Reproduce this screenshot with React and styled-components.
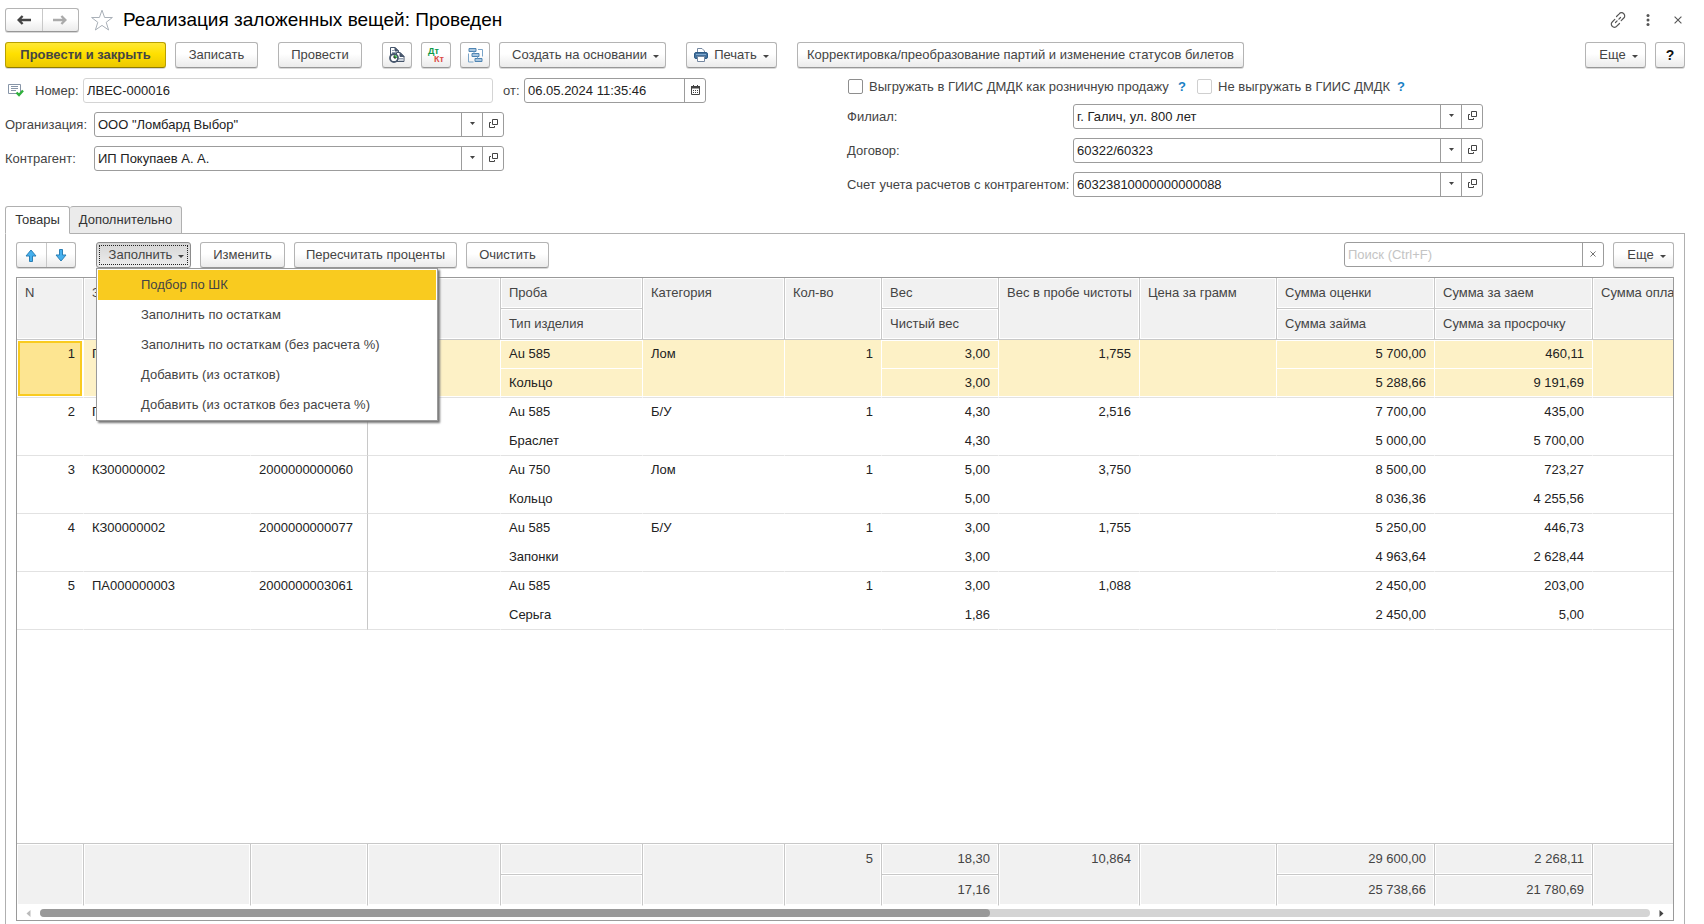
import React from "react";
import styled, { createGlobalStyle, css } from "styled-components";

const Global = createGlobalStyle`
  * { box-sizing: border-box; }
  body { margin: 0; background: #fff; }
  body, button, input, table {
    font-family: "Liberation Sans", Arial, sans-serif;
    font-size: 13px;
    line-height: 16px;
    color: #444;
  }
`;

const Page = styled.div`
  display: flex;
  flex-direction: column;
  height: 100vh;
  overflow: hidden;
  padding: 8px 19px 0 5px;
`;

const TitleBar = styled.header`
  display: flex;
  align-items: center;
  height: 24px;
`;

const Title = styled.h1`
  margin: 0 0 0 9px;
  flex: 1;
  font-size: 19px;
  line-height: 24px;
  font-weight: 400;
  color: #000;
  white-space: nowrap;
`;

const raised = css`
  border: 1px solid #b4b4b4;
  border-bottom-color: #979797;
  border-radius: 3px;
  background: linear-gradient(#fff 0%, #fff 45%, #ebebeb 100%);
  box-shadow: 0 1px 0 #d8d8d8;
`;

const ButtonPair = styled.div`
  ${raised}
  display: flex;
  width: ${(p) => p.$w}px;
  height: ${(p) => p.$h}px;
  flex: none;
`;

const PairButton = styled.button`
  flex: 1;
  display: flex;
  align-items: center;
  justify-content: center;
  padding: 0;
  border: 0;
  background: none;
  & + & { border-left: 1px solid #c8c8c8; }
`;

const IconButton = styled.button`
  display: flex;
  align-items: center;
  justify-content: center;
  width: 24px;
  height: 24px;
  padding: 0;
  border: 0;
  background: none;
`;

const StarButton = styled(IconButton)`
  margin-left: 11px;
`;

const WindowActions = styled.div`
  display: flex;
  gap: 6px;
  margin-right: -5px;
`;

const Toolbar = styled.div`
  display: flex;
  gap: 9px;
  margin-top: 10px;
`;

const Group = styled.div`
  display: flex;
  gap: 9px;
  margin-right: ${(p) => (p.$last ? 0 : 11)}px;
`;

const Spacer = styled.div`
  flex: 1;
`;

const Button = styled.button`
  ${raised}
  display: flex;
  align-items: center;
  justify-content: center;
  gap: 6px;
  width: ${(p) => p.$w}px;
  height: 26px;
  padding: 0;
  white-space: nowrap;
  flex: none;
  ${(p) => p.$menu && css`padding-left: 6px;`}
  ${(p) => p.$primary && css`
    border-color: #b8a000;
    border-bottom-color: #8f7c00;
    background: linear-gradient(#ffe836 0%, #ffe000 45%, #ecc800 100%);
    font-weight: 700;
  `}
  ${(p) => p.$pressed && css`
    border-color: #8c8c8c;
    background: linear-gradient(#d6d6d6, #ededed);
    outline: 1px dotted #222;
    outline-offset: -4px;
  `}
  ${(p) => p.$bold && css`
    font-weight: 700;
    font-size: 14px;
    color: #111;
  `}
`;

const Form = styled.div`
  display: flex;
  margin-top: 10px;
`;

const LeftFields = styled.div`
  display: flex;
  flex-direction: column;
  gap: 9px;
  width: 842px;
`;

const RightFields = styled.div`
  display: flex;
  flex-direction: column;
  gap: 9px;
`;

const FieldRow = styled.div`
  display: flex;
  align-items: center;
  height: 25px;
`;

const FieldLabel = styled.label`
  width: ${(p) => p.$w}px;
  white-space: nowrap;
  flex: none;
`;

const StatusIcon = styled.span`
  display: flex;
  width: 30px;
  padding-left: 3px;
`;

const DateLabel = styled.label`
  width: 31px;
  padding-left: 10px;
`;

const Box = styled.div`
  display: flex;
  width: ${(p) => p.$w}px;
  height: 25px;
  border: 1px solid ${(p) => (p.$muted ? "#d4d4d4" : "#9c9c9c")};
  border-radius: 3px;
  background: #fff;
  overflow: hidden;
`;

const TextInput = styled.input`
  flex: 1;
  min-width: 0;
  height: 100%;
  padding: 0 3px;
  border: 0;
  outline: 0;
  background: none;
  color: #222;
  &::placeholder { color: #c4c4c4; opacity: 1; }
`;

const BoxButton = styled.button`
  display: flex;
  align-items: center;
  justify-content: center;
  width: 21px;
  padding: 0 0 2px;
  border: 0;
  border-left: 1px solid #9c9c9c;
  background: none;
`;

const CheckRow = styled.div`
  display: flex;
  align-items: center;
  height: 17px;
  padding-left: 1px;
`;

const Check = styled.input`
  appearance: none;
  width: 15px;
  height: 15px;
  margin: 0 6px 0 0;
  border: 1px solid ${(p) => (p.disabled ? "#cfcfcf" : "#8e8e8e")};
  border-radius: 2px;
  background: #fff;
`;

const CheckLabel = styled.label`
  width: ${(p) => p.$w}px;
  white-space: nowrap;
`;

const Hint = styled.button`
  width: 19px;
  padding: 0;
  border: 0;
  background: none;
  font-weight: 700;
  text-align: left;
  color: #1a7fc4;
`;

const Tabs = styled.div`
  display: flex;
  height: 28px;
  margin-bottom: -1px;
  margin-top: 9px;
  z-index: 1;
`;

const Tab = styled.button`
  width: ${(p) => p.$w}px;
  padding: 0;
  border: 1px solid #b0b0b0;
  border-radius: 3px 3px 0 0;
  background: ${(p) => (p.$active ? "#fff" : "#ebebeb")};
  border-bottom-color: ${(p) => (p.$active ? "#fff" : "#b0b0b0")};
  color: #333;
  & + & { border-left: 0; }
`;

const Panel = styled.section`
  flex: 1;
  min-height: 0;
  display: flex;
  flex-direction: column;
  border: 1px solid #b0b0b0;
  border-bottom: 0;
  padding: 8px 10px 3px;
`;

const PanelBar = styled.div`
  display: flex;
  gap: 9px;
`;

const MenuAnchor = styled.div`
  position: relative;
  margin-left: 11px;
`;

const Menu = styled.ul`
  position: absolute;
  top: 26px;
  left: 0;
  z-index: 5;
  width: 342px;
  margin: 0;
  padding: 1px 1px 0;
  list-style: none;
  background: #fff;
  border: 1px solid #9a9a9a;
  box-shadow: 2px 2px 2px #777;
`;

const MenuItem = styled.button`
  display: block;
  width: 100%;
  height: 30px;
  padding: 0 0 0 43px;
  border: 0;
  text-align: left;
  background: ${(p) => (p.$active ? "#f9cb1f" : "transparent")};
`;

const Frame = styled.div`
  flex: 1;
  min-height: 0;
  display: flex;
  flex-direction: column;
  margin-top: 9px;
  border: 1px solid #9a9a9a;
  overflow: hidden;
`;

const Grid = styled.table`
  width: 1738px;
  table-layout: fixed;
  border-collapse: separate;
  border-spacing: 0;
  flex: none;
`;

const HeadCell = styled.th`
  height: 31px;
  padding: 7px 8px;
  vertical-align: top;
  text-align: left;
  font-weight: 400;
  white-space: nowrap;
  background: #f1f1f1;
  border-right: 1px solid #c8c8c8;
  border-bottom: 1px solid #c8c8c8;
  box-shadow: inset 0 0 0 1px #fff;
`;

const Cell = styled.td`
  height: 29px;
  padding: 6px 8px;
  vertical-align: top;
  white-space: nowrap;
  color: #222;
  text-align: ${(p) => (p.$right ? "right" : "left")};
  border-right: 1px solid ${(p) => (p.$line ? "#c8c8c8" : "transparent")};
  border-bottom: 1px solid ${(p) => (p.$inner ? "transparent" : "#e2e2e2")};
  ${(p) => p.$selected && css`
    background: #fdf1c6;
    background-clip: padding-box;
    border-right-color: #fff;
    ${p.$inner && css`border-bottom-color: #fff;`}
    box-shadow: inset 0 ${p.$inner ? 1 : 0}px 0 #fff, inset 0 ${p.$inner ? 0 : -1}px 0 #fff;
  `}
  ${(p) => p.$current && css`
    background: #fde591;
    box-shadow: inset 0 0 0 1px #fff, inset 0 0 0 3px #f9cb1f;
  `}
`;

const FootCell = styled(HeadCell).attrs({ as: "td" })`
  text-align: right;
  border-bottom-color: ${(p) => (p.$inner ? "#c8c8c8" : "#fff")};
`;

const FootGrid = styled(Grid)`
  border-top: 1px solid #c8c8c8;
`;

const ScrollBar = styled.div`
  display: flex;
  align-items: center;
  flex: none;
  height: 14px;
  padding: 0 9px;
  gap: 9px;
`;

const Track = styled.div`
  flex: 1;
  height: 8px;
  border-radius: 4px;
  background: #d4d4d4;
`;

const Thumb = styled.div`
  width: 59%;
  height: 8px;
  border-radius: 4px;
  background: #999;
`;

const Caret = () => (
  <svg width="6" height="5" viewBox="0 0 6 5"><path d="M0 2h6L3 5z" fill="#444" /></svg>
);

const SmallCaret = () => (
  <svg width="5" height="3" viewBox="0 0 5 3"><path d="M0 0h5L2.5 3z" fill="#444" /></svg>
);

const OpenIcon = () => (
  <svg width="9" height="9" viewBox="0 0 9 9" fill="none" stroke="#444">
    <path d="M3.5 0.5h5v5h-5z" /><path d="M2 3.5H0.5v5h5V7" />
  </svg>
);

const BackArrow = ({ color }) => (
  <svg width="14" height="10" viewBox="0 0 14 10" fill="none" stroke={color} strokeWidth="2.4">
    <path d="M14 5H2M5.6 1L1.6 5l4 4" />
  </svg>
);

const ForwardArrow = ({ color }) => (
  <svg width="14" height="10" viewBox="0 0 14 10" fill="none" stroke={color} strokeWidth="2.4">
    <path d="M0 5h12M8.4 1l4 4-4 4" />
  </svg>
);

const StarIcon = () => (
  <svg width="24" height="23" viewBox="0 0 24 23" fill="#fff" stroke="#a9b0b8">
    <path d="M12 1.2L14.600 8.500H22.400L16.200 13.300L18.600 21L12 16.400L5.400 21L7.800 13.300L1.600 8.500H9.400Z" />
  </svg>
);

const LinkIcon = () => (
  <svg width="16" height="16" viewBox="0 0 16 16" fill="none" stroke="#555" strokeWidth="1.2" strokeLinecap="round">
    <path d="M6.5 4.5l2.7-2.7a2.9 2.9 0 0 1 4.600 0 2.9 2.9 0 0 1 0 4.200l-2.600 2.600" />
    <path d="M9.5 11.5l-2.700 2.700a2.9 2.9 0 0 1-4.600 0 2.9 2.9 0 0 1 0-4.200l2.600-2.600" />
    <path d="M5.5 10.500l1.600-1.600M8.900 7.100l1.600-1.600" />
  </svg>
);

const DotsIcon = () => (
  <svg width="4" height="12" viewBox="0 0 4 12" fill="#555">
    <circle cx="2" cy="1.6" r="1.5" /><circle cx="2" cy="6" r="1.5" /><circle cx="2" cy="10.4" r="1.5" />
  </svg>
);

const CrossIcon = ({ size }) => (
  <svg width={size} height={size} viewBox="0 0 8 8" stroke="#555" strokeWidth="1.1">
    <path d="M0.6 0.6l6.8 6.8M7.4 0.6L0.6 7.4" />
  </svg>
);

const ReportIcon = () => (
  <svg width="16" height="16" viewBox="0 0 16 16" fill="none" stroke="#46566c">
    <path d="M1.500 8V0.500H6L9.500 4v3" fill="#fff" />
    <path d="M6 0.500L9.500 4H6z" fill="#46566c" />
    <path d="M3 3.500h2M3 5.500h4" stroke="#93a1b3" />
    <path d="M7.500 5.500H11l4 4v5H7.500z" fill="#fff" />
    <path d="M11 5.500l4 4h-4z" fill="#46566c" />
    <path d="M10 11.500h4M10 13h4" stroke="#93a1b3" />
    <circle cx="5" cy="11" r="4" fill="#fff" strokeWidth="1.8" />
    <path d="M5 11V8a3 3 0 0 1 3 3z" fill="#46c04c" stroke="none" />
    <path d="M5 8.500V11h2" stroke="#222" />
  </svg>
);

const DtKt = styled.span`
  display: flex;
  flex-direction: column;
  width: 16px;
  font-size: 9px;
  line-height: 8px;
  font-weight: 700;
  text-align: left;
  color: #0e9a4a;
`;

const Kt = styled.span`
  align-self: flex-end;
  color: #dc4b45;
`;

const StructureIcon = () => (
  <svg width="15" height="15" viewBox="0 0 15 15" fill="#a9c6df" stroke="#4f85b3">
    <path d="M1 0.500h7v3H1zM4 5.500h7v3H4zM7 10.500h7v3H7z" />
    <path d="M10 1.500h4.500V8.500M0.500 5.500v8.500h5M6 3.500v2M9.500 8.500v2" fill="none" stroke="#7ba5c9" />
  </svg>
);

const PrinterIcon = () => (
  <svg width="14" height="14" viewBox="0 0 14 14">
    <path d="M3.500 5V0.500H8L10.500 3v2" fill="#fff" stroke="#7487a0" />
    <rect x="0.500" y="4.500" width="13" height="6" rx="1.5" fill="#44719c" stroke="#2c5a86" />
    <path d="M2 6.500h10" stroke="#7fa8cf" />
    <path d="M3.500 8.500h7v5h-7z" fill="#fff" stroke="#7487a0" />
  </svg>
);

const CalendarIcon = () => (
  <svg width="9" height="10" viewBox="0 0 9 10">
    <path d="M0.5 2.5h8v7h-8z" fill="#fff" stroke="#444" />
    <path d="M0 1h9v2.5H0zM2 0h1v2H2zM6 0h1v2H6z" fill="#444" />
    <path d="M2 5.5h5M2 7.5h5" stroke="#444" strokeDasharray="1 1" />
  </svg>
);

const DocIcon = () => (
  <svg width="16" height="13" viewBox="0 0 16 13" fill="none">
    <path d="M0.5 0.5h12v9h-12z" fill="#fff" stroke="#8795a8" />
    <path d="M3 2.500h7M3 4.500h7M3 6.500h5" stroke="#8795a8" />
    <path d="M8.500 8.500l2.500 2.500 4-4.500" stroke="#2fb03c" strokeWidth="2.4" />
  </svg>
);

const MoveArrow = ({ down }) => (
  <svg width="12" height="13" viewBox="0 0 12 13" fill="#45b0ee" stroke="#2a7fb5">
    {down
      ? <path d="M4.5 0.5h3v5.5h3.5L6 12 1 6h3.5z" />
      : <path d="M6 1l5 6H7.5v5.5h-3V7H1z" />}
  </svg>
);

const ScrollArrow = ({ left }) => (
  <svg width="5" height="7" viewBox="0 0 5 7" fill={left ? "#bbb" : "#444"}>
    <path d={left ? "M4.5 0v7L0.5 3.5z" : "M0.5 0v7l4-3.5z"} />
  </svg>
);

const columnWidths = [67, 167, 117, 133, 142, 142, 97, 117, 141, 137, 158, 158, 162];

const Columns = () => (
  <colgroup>{columnWidths.map((w, i) => <col key={i} width={w} />)}</colgroup>
);

const header = [
  ["N"], ["Залоговый билет"], ["Штрихкод"], [""],
  ["Проба", "Тип изделия"], ["Категория"], ["Кол-во"], ["Вес", "Чистый вес"],
  ["Вес в пробе чистоты"], ["Цена за грамм"], ["Сумма оценки", "Сумма займа"],
  ["Сумма за заем", "Сумма за просрочку"], ["Сумма оплаты"],
];

const rows = [
  [["1"], ["ПА000000001"], [""], [""], ["Au 585", "Кольцо"], ["Лом"], ["1"], ["3,00", "3,00"], ["1,755"], [""], ["5 700,00", "5 288,66"], ["460,11", "9 191,69"], [""]],
  [["2"], ["ПА000000001"], [""], [""], ["Au 585", "Браслет"], ["Б/У"], ["1"], ["4,30", "4,30"], ["2,516"], [""], ["7 700,00", "5 000,00"], ["435,00", "5 700,00"], [""]],
  [["3"], ["КЗ00000002"], ["2000000000060"], [""], ["Au 750", "Кольцо"], ["Лом"], ["1"], ["5,00", "5,00"], ["3,750"], [""], ["8 500,00", "8 036,36"], ["723,27", "4 255,56"], [""]],
  [["4"], ["КЗ00000002"], ["2000000000077"], [""], ["Au 585", "Запонки"], ["Б/У"], ["1"], ["3,00", "3,00"], ["1,755"], [""], ["5 250,00", "4 963,64"], ["446,73", "2 628,44"], [""]],
  [["5"], ["ПА000000003"], ["2000000003061"], [""], ["Au 585", "Серьга"], [""], ["1"], ["3,00", "1,86"], ["1,088"], [""], ["2 450,00", "2 450,00"], ["203,00", "5,00"], [""]],
];

const totals = [
  [""], [""], [""], [""], ["", ""], [""], ["5"], ["18,30", "17,16"], ["10,864"], [""],
  ["29 600,00", "25 738,66"], ["2 268,11", "21 780,69"], [""],
];

const numeric = new Set([0, 6, 7, 8, 9, 10, 11, 12]);

const fillActions = [
  "Подбор по ШК",
  "Заполнить по остаткам",
  "Заполнить по остаткам (без расчета %)",
  "Добавить (из остатков)",
  "Добавить (из остатков без расчета %)",
];

function PairRows({ cells, CellType, cellProps = () => ({}) }) {
  return (
    <>
      <tr>
        {cells.map((c, i) => (
          <CellType key={i} rowSpan={c.length === 1 ? 2 : 1} $inner={c.length === 2} {...cellProps(i)}>{c[0]}</CellType>
        ))}
      </tr>
      <tr>
        {cells.map((c, i) => c.length === 2 && <CellType key={i} {...cellProps(i)}>{c[1]}</CellType>)}
      </tr>
    </>
  );
}

function RefField({ id, label, labelWidth, value }) {
  return (
    <FieldRow>
      <FieldLabel htmlFor={id} $w={labelWidth}>{label}</FieldLabel>
      <Box $w={410}>
        <TextInput id={id} defaultValue={value} />
        <BoxButton aria-label="Выбрать"><SmallCaret /></BoxButton>
        <BoxButton aria-label="Открыть"><OpenIcon /></BoxButton>
      </Box>
    </FieldRow>
  );
}

export default function App() {
  return (
    <Page>
      <Global />
      <TitleBar>
        <ButtonPair $w={74} $h={24}>
          <PairButton aria-label="Назад"><BackArrow color="#444" /></PairButton>
          <PairButton aria-label="Вперед"><ForwardArrow color="#aaa" /></PairButton>
        </ButtonPair>
        <StarButton aria-label="В избранное"><StarIcon /></StarButton>
        <Title>Реализация заложенных вещей: Проведен</Title>
        <WindowActions>
          <IconButton aria-label="Ссылка"><LinkIcon /></IconButton>
          <IconButton aria-label="Меню"><DotsIcon /></IconButton>
          <IconButton aria-label="Закрыть"><CrossIcon size={8} /></IconButton>
        </WindowActions>
      </TitleBar>

      <Toolbar>
        <Group>
          <Button $w={161} $primary>Провести и закрыть</Button>
          <Button $w={83}>Записать</Button>
        </Group>
        <Group><Button $w={84}>Провести</Button></Group>
        <Group>
          <Button $w={30} aria-label="Отчеты"><ReportIcon /></Button>
          <Button $w={30}><DtKt>Дт<Kt>Кт</Kt></DtKt></Button>
          <Button $w={30} aria-label="Структура"><StructureIcon /></Button>
          <Button $w={167} $menu>Создать на основании <Caret /></Button>
        </Group>
        <Group><Button $w={91}><PrinterIcon />Печать <Caret /></Button></Group>
        <Group $last>
          <Button $w={447}>Корректировка/преобразование партий и изменение статусов билетов</Button>
        </Group>
        <Spacer />
        <Button $w={61} $menu>Еще <Caret /></Button>
        <Button $w={30} $bold>?</Button>
      </Toolbar>

      <Form>
        <LeftFields>
          <FieldRow>
            <StatusIcon><DocIcon /></StatusIcon>
            <FieldLabel htmlFor="number" $w={48}>Номер:</FieldLabel>
            <Box $w={410} $muted><TextInput id="number" defaultValue="ЛВЕС-000016" /></Box>
            <DateLabel htmlFor="date">от:</DateLabel>
            <Box $w={182}>
              <TextInput id="date" defaultValue="06.05.2024 11:35:46" />
              <BoxButton aria-label="Календарь"><CalendarIcon /></BoxButton>
            </Box>
          </FieldRow>
          <RefField id="org" label="Организация:" labelWidth={89} value={'ООО "Ломбард Выбор"'} />
          <RefField id="partner" label="Контрагент:" labelWidth={89} value="ИП Покупаев А. А." />
        </LeftFields>
        <RightFields>
          <CheckRow>
            <Check type="checkbox" id="retail" />
            <CheckLabel htmlFor="retail" $w={309}>Выгружать в ГИИС ДМДК как розничную продажу</CheckLabel>
            <Hint>?</Hint>
            <Check type="checkbox" id="skip" disabled />
            <CheckLabel htmlFor="skip" $w={179}>Не выгружать в ГИИС ДМДК</CheckLabel>
            <Hint>?</Hint>
          </CheckRow>
          <RefField id="branch" label="Филиал:" labelWidth={226} value="г. Галич, ул. 800 лет" />
          <RefField id="contract" label="Договор:" labelWidth={226} value="60322/60323" />
          <RefField id="account" label="Счет учета расчетов с контрагентом:" labelWidth={226} value="60323810000000000088" />
        </RightFields>
      </Form>

      <Tabs>
        <Tab $w={65} $active>Товары</Tab>
        <Tab $w={112}>Дополнительно</Tab>
      </Tabs>
      <Panel>
        <PanelBar>
          <ButtonPair $w={60} $h={26}>
            <PairButton aria-label="Вверх"><MoveArrow /></PairButton>
            <PairButton aria-label="Вниз"><MoveArrow down /></PairButton>
          </ButtonPair>
          <MenuAnchor>
            <Button $w={95} $menu $pressed>Заполнить <Caret /></Button>
            <Menu>
              {fillActions.map((t, i) => <li key={t}><MenuItem $active={i === 0}>{t}</MenuItem></li>)}
            </Menu>
          </MenuAnchor>
          <Button $w={85}>Изменить</Button>
          <Button $w={163}>Пересчитать проценты</Button>
          <Button $w={83}>Очистить</Button>
          <Spacer />
          <Box $w={260}>
            <TextInput aria-label="Поиск" placeholder="Поиск (Ctrl+F)" />
            <BoxButton aria-label="Очистить поиск"><CrossIcon size={6} /></BoxButton>
          </Box>
          <Button $w={61} $menu>Еще <Caret /></Button>
        </PanelBar>

        <Frame>
          <Grid>
            <Columns />
            <thead><PairRows cells={header} CellType={HeadCell} /></thead>
            <tbody>
              {rows.map((cells, r) => (
                <PairRows
                  key={r}
                  cells={cells}
                  CellType={Cell}
                  cellProps={(i) => ({
                    $right: numeric.has(i),
                    $line: i === 2,
                    $selected: r === 0,
                    $current: r === 0 && i === 0,
                  })}
                />
              ))}
            </tbody>
          </Grid>
          <Spacer />
          <FootGrid>
            <Columns />
            <tbody><PairRows cells={totals} CellType={FootCell} /></tbody>
          </FootGrid>
          <ScrollBar>
            <ScrollArrow left />
            <Track><Thumb /></Track>
            <ScrollArrow />
          </ScrollBar>
        </Frame>
      </Panel>
    </Page>
  );
}
